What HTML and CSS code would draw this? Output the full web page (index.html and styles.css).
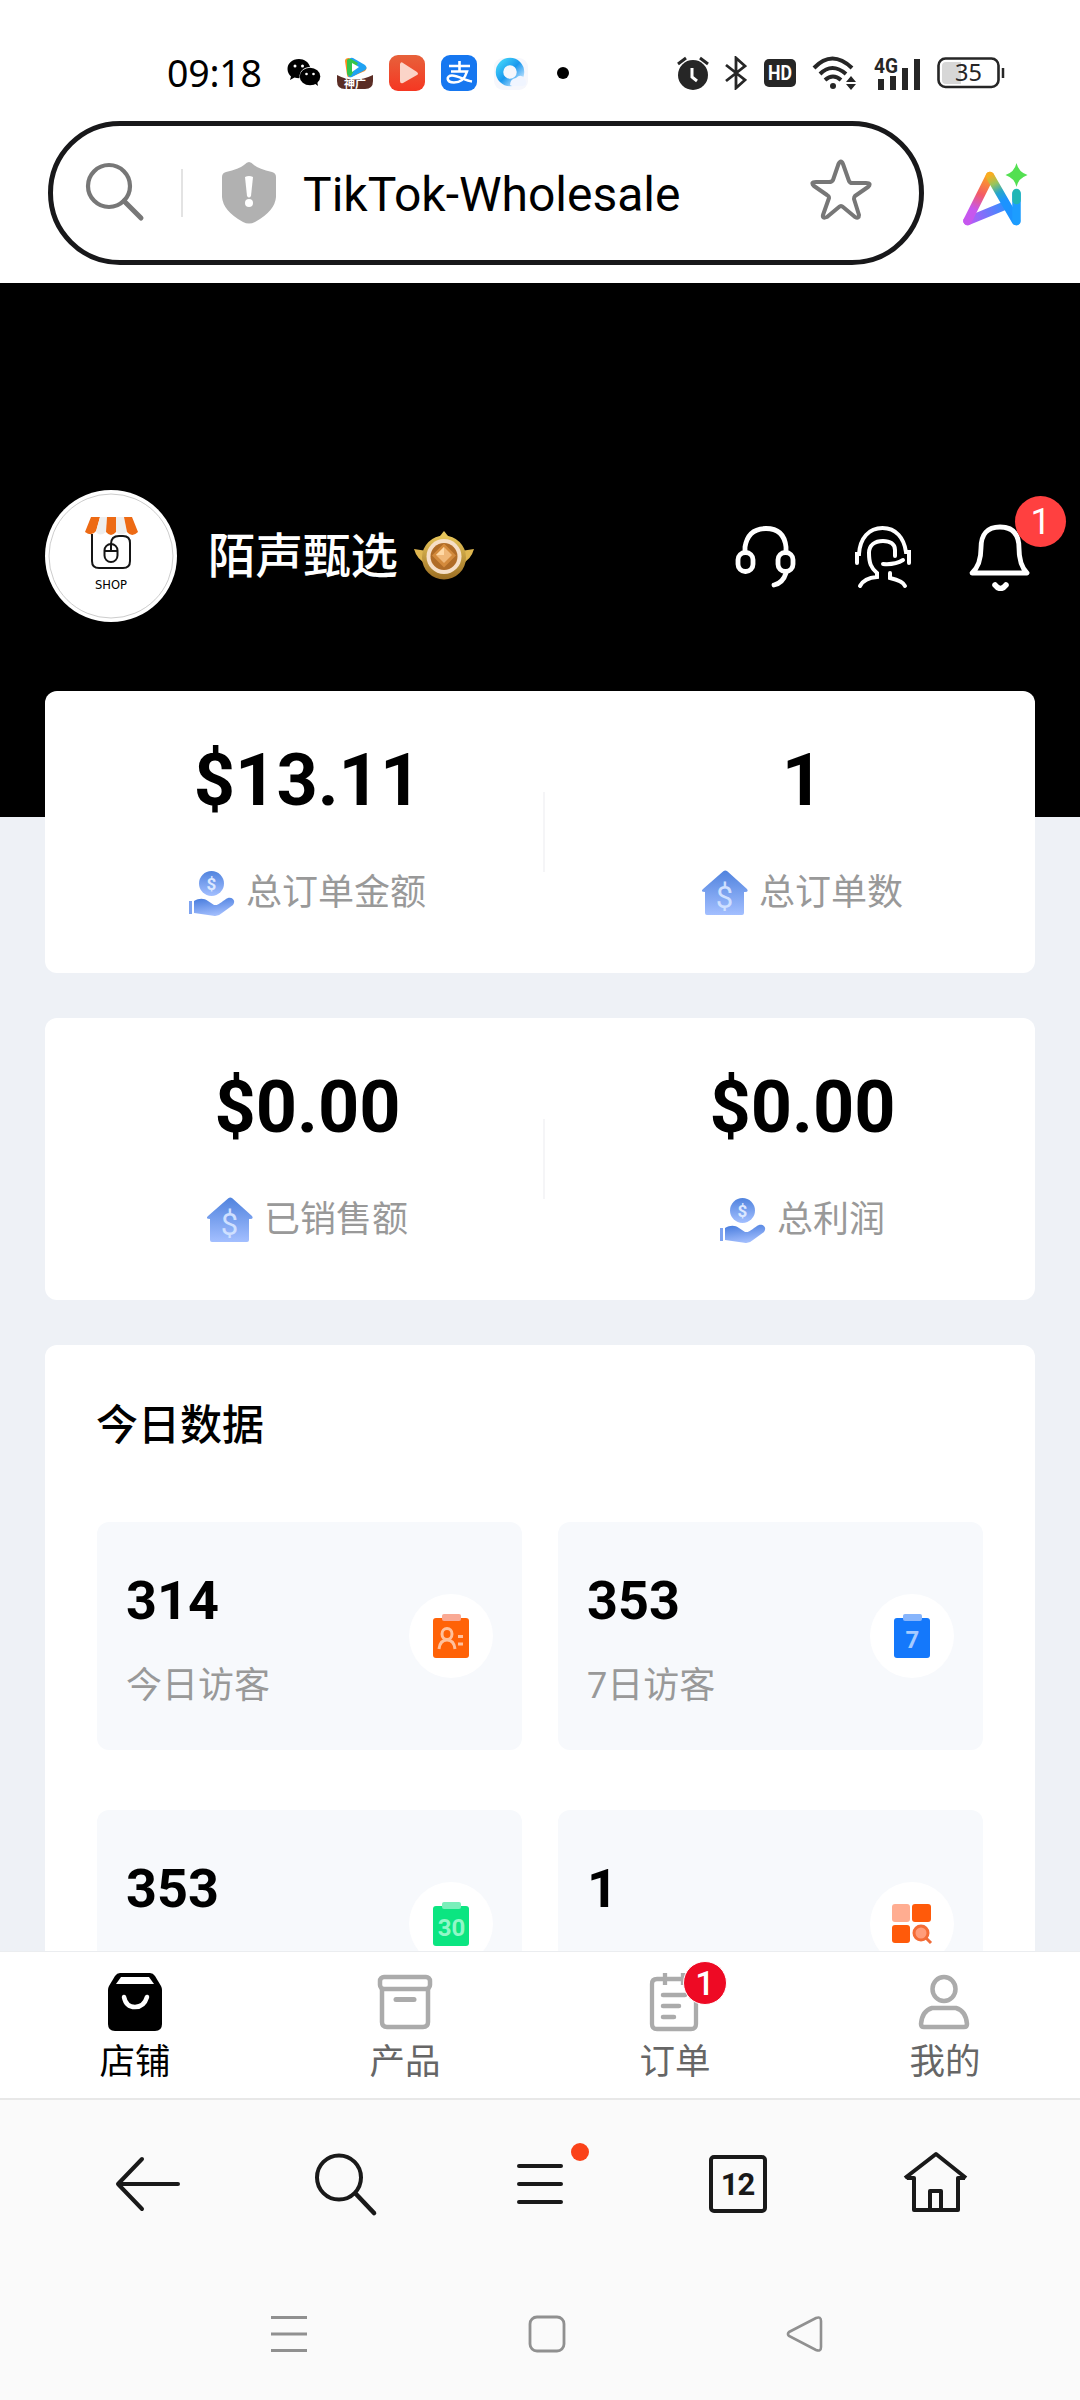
FILE: index.html
```html
<!DOCTYPE html>
<html lang="zh-CN">
<head>
<meta charset="utf-8">
<meta name="viewport" content="width=device-width, initial-scale=1">
<title>TikTok-Wholesale</title>
<link rel="stylesheet" href="styles.css">
</head>
<body>
<svg class="defs" width="0" height="0" aria-hidden="true">
  <defs>
    <linearGradient id="blue" x1="0" y1="0" x2="0" y2="1"><stop offset="0" stop-color="#5083de"/><stop offset="1" stop-color="#a3bfff"/></linearGradient>
    <linearGradient id="hand" x1="0" y1="0" x2=".3" y2="1"><stop offset="0" stop-color="#4379dc"/><stop offset="1" stop-color="#a0bcfc"/></linearGradient>
    <symbol id="money" viewBox="0 0 46 46">
      <circle cx="22.500" cy="13.500" r="12.500" fill="url(#blue)"/>
      <text x="22.500" y="19.500" text-anchor="middle" class="glyph" font-size="17" fill="#dce8ff">$</text>
      <path d="M0 31h3v13H0z" fill="#7ea3f0"/>
      <path d="M5 31c5-3 10-3 14 0l6 4c5 1 9-5 14-7 5-1 8 3 5 7L33 43q-3 3-7 3L5 43z" fill="url(#hand)"/>
    </symbol>
    <symbol id="house" viewBox="0 0 46 46">
      <path d="M21.300 1.200q2-1.500 4 0L45 19q2 3-2 3h-1v21q0 2-2 2H5q-2 0-2-2V22q-5 0-2-3z" fill="url(#blue)"/>
      <text x="22.500" y="38" text-anchor="middle" class="glyph thin" font-size="31" fill="#cfe0ff">$</text>
    </symbol>
  </defs>
</svg>
<div class="phone">
  <header class="status">
    <time class="clock">09:18</time>
    <div class="apps">
      <svg width="34" height="30" viewBox="0 0 34 30"><path d="M12 1C5 1 .500 5.500.500 11c0 3 1.500 5.500 3.500 7.500L3 22l4.500-2.500q2 .700 5 .700C12 13 17 9 23 9 22 4 17 1 12 1z"/><ellipse cx="23" cy="18.500" rx="10.300" ry="8.700"/><path d="M27 25l4 3-1-5z"/><g fill="#fff"><circle cx="8" cy="8" r="1.500"/><circle cx="15.500" cy="8" r="1.500"/><circle cx="19.500" cy="16" r="1.300"/><circle cx="26.500" cy="16" r="1.300"/></g></svg>
      <svg width="36" height="36" viewBox="0 0 36 36"><path d="M8 6q0-3 4-3L28 11q3 2 0 5L14 22q-4 1-4-2z" fill="#ff8a1f"/><path d="M12 5q1-3 4-2l12 7q3 3 0 5L15 22q-4 1-4-2z" fill="#1fa2f3"/><path d="M10 5q1-2 4-1l7 4-7 13q-4 0-4-3z" fill="#35c54a"/><path d="M15 8l7 4-7 5z" fill="#fff"/><path d="M0 20q17 9 36 0v6q0 8-8 8H8q-8 0-8-8z" fill="#5b2d25"/><text x="18" y="32.500" text-anchor="middle" class="glyph" font-size="11" fill="#fff">神广</text></svg>
      <svg width="36" height="36" viewBox="0 0 36 36"><defs><linearGradient id="red" x2="0" y2="1"><stop stop-color="#e7613b"/><stop offset="1" stop-color="#f53722"/></linearGradient></defs><rect width="36" height="36" rx="9" fill="url(#red)"/><path d="M11 9q1-3 3-1l14 9q2 2 0 3L14 28q-3 1-3-2z" fill="#fbd4c8"/></svg>
      <svg width="36" height="36" viewBox="0 0 36 36"><rect width="36" height="36" rx="9" fill="#1677f0"/><path d="M8 11h21M18.500 6v10M10 16.500h16c-2 7-7 11-13 11-8 0-8-7-2-7 6 0 13 5 20 6" fill="none" stroke="#fff" stroke-width="2.600"/></svg>
      <svg width="36" height="36" viewBox="0 0 36 36"><defs><linearGradient id="qq" x2="1" y2="1"><stop stop-color="#41d1f8"/><stop offset=".5" stop-color="#1a98ee"/><stop offset="1" stop-color="#c7e6ff"/></linearGradient></defs><rect x="1" y="3" width="34" height="32" rx="9" fill="#f6f7fc"/><circle cx="17" cy="17" r="10.500" fill="none" stroke="url(#qq)" stroke-width="7.500"/><path d="M17 30q0-6 6-7 5-5 9 1 3 6-2 7H19z" fill="#f0f5ff"/></svg>
      <span class="more-dot"></span>
    </div>
    <div class="signals">
      <svg width="34" height="36" viewBox="0 0 34 36" fill="none" stroke="#262626"><circle cx="17" cy="20" r="15" fill="#262626" stroke="none"/><path d="M2 9l8-6M32 9l-8-6" stroke-width="3"/><path d="M16 13v9l5 4" stroke="#fff" stroke-width="3"/></svg>
      <svg width="22" height="34" viewBox="0 0 22 34" fill="none" stroke="#262626" stroke-width="2.800"><path d="M1 9l19 15-9 8V2l9 8L1 25"/></svg>
      <svg width="34" height="30" viewBox="0 0 34 30"><rect x="1" y="1" width="32" height="28" rx="5" fill="#262626"/><text x="17" y="22" text-anchor="middle" class="glyph" font-size="20" textLength="24" lengthAdjust="spacingAndGlyphs" fill="#fff">HD</text></svg>
      <svg width="46" height="36" viewBox="0 0 46 36" fill="none" stroke="#262626" stroke-width="4"><path d="M2 13q18-19 38 0M8 19q12-12 26 0M13 25q8-7 16 0"/><circle cx="21" cy="31" r="3" fill="#262626" stroke="none"/><path d="M34 27l5-6 5 6zM34 29l5 6 5-6z" fill="#262626" stroke="none"/></svg>
      <svg width="48" height="34" viewBox="0 0 48 34" fill="#262626"><path d="M4 23h6v11H4zM16 20h6v14h-6zM28 12h6v22h-6zM40 3h6v31h-6z"/><text x="0" y="17" class="glyph" font-size="21" textLength="24" lengthAdjust="spacingAndGlyphs">4G</text></svg>
      <svg width="68" height="32" viewBox="0 0 68 32"><rect x="1.500" y="1.500" width="60" height="28.500" rx="7" fill="none" stroke="#262626" stroke-width="2.600"/><path d="M5 9q0-4 4-4h15v22H9q-4 0-4-4z" fill="#d7d7d7"/><path d="M66 11v10" stroke="#262626" stroke-width="2.500"/><text x="31.500" y="24" text-anchor="middle" class="light" font-size="23.500" fill="#262626">35</text></svg>
    </div>
  </header>

  <div class="address">
    <div class="pill">
      <svg class="i-search" width="62" height="62" viewBox="0 0 62 62" fill="none" stroke="#777" stroke-width="4.200" stroke-linecap="round"><circle cx="25" cy="25" r="21"/><path d="M40 40l17 17" stroke-width="5"/></svg>
      <span class="bar"></span>
      <svg class="i-shield" width="54" height="62" viewBox="0 0 54 62"><path d="M27 0q2 0 5 3 5 4 18 7 4 1 4 5v20Q53 49 33 60q-6 3-12 0Q1 49 0 35V15q0-4 4-5Q17 7 22 3q3-3 5-3z" fill="#b1b1b1"/><path d="M23 15q4-2 8 0l-2 19q-2 3-4 0z" fill="#fff"/><circle cx="27" cy="41" r="4" fill="#fff"/></svg>
      <span class="site">TikTok-Wholesale</span>
      <svg class="i-star" width="62" height="62" viewBox="0 0 62 62" fill="none" stroke="#777" stroke-width="4" stroke-linejoin="round"><path d="M28.500 5q2.500-5 4.500 0l6 17q1 2 3 2h14q6 0 2 4L45 37q-1 1-1 3l5 16q0 4-4 2l-12-10q-2-2-4 0L17 58q-5 2-4-2l6-17q0-2-2-3L4 27q-4-4 2-4h13q3 0 4-2z"/></svg>
    </div>
    <svg class="i-ai" width="66" height="64" viewBox="0 0 66 64" fill="none"><defs><linearGradient id="ai" x1="27" y1="8" x2="5" y2="59" gradientUnits="userSpaceOnUse"><stop offset=".1" stop-color="#fca321"/><stop offset=".45" stop-color="#f45b65"/><stop offset=".75" stop-color="#c657ee"/></linearGradient><linearGradient id="ai2" x1="27" y1="12" x2="50" y2="55" gradientUnits="userSpaceOnUse"><stop stop-color="#f9ad20"/><stop offset=".2" stop-color="#9bc55a"/><stop offset=".4" stop-color="#27a7c8"/><stop offset=".6" stop-color="#1c93ff"/></linearGradient><linearGradient id="ai3" x1="4" y1="58" x2="40" y2="40" gradientUnits="userSpaceOnUse"><stop stop-color="#bd58f5"/><stop offset="1" stop-color="#348eff"/></linearGradient></defs><g stroke-width="8.500" stroke-linecap="round" stroke-linejoin="round"><path d="M4.500 58L41 43" stroke="url(#ai3)"/><path d="M27 13L4.500 58" stroke="url(#ai)"/><path d="M27 13l26 45" stroke="url(#ai2)"/><path d="M53.500 58V31" stroke="#1c9dff"/><path d="M53.500 37v-7" stroke="#20b6b4"/></g><path d="M53.500 0q2 9 11 12-9 3-11 12-2-9-11-12 9-3 11-12z" fill="#53e051"/></svg>
  </div>

  <main class="page">
    <section class="hero">
      <svg class="avatar" width="132" height="132" viewBox="0 0 132 132"><circle cx="66" cy="66" r="66" fill="#fff"/><circle cx="66" cy="66" r="62" fill="none" stroke="#999" stroke-width=".5"/><g fill="none" stroke="#151515" stroke-width="2"><path d="M47 44v27q0 7 7 7h24q7 0 7-7V53q0-7-7-7h-4q-8 0-8 8"/><rect x="59.500" y="54" width="13" height="18" rx="6.500"/><path d="M59.500 61h13M66 54v7"/></g><path d="M46 27h9l-4 14q-4 6-11 1z" fill="#ed6a14"/><path d="M55 27h7l-1 15q-6 5-10 0z" fill="#eee"/><path d="M62 27h9v15q-5 6-10 0z" fill="#ed6a14"/><path d="M71 27h8l3 15q-6 5-11 0z" fill="#eee"/><path d="M79 27h8l6 15q-6 6-11 0z" fill="#ed6a14"/><text x="66" y="99" text-anchor="middle" class="shop" font-size="11.500" textLength="32" lengthAdjust="spacingAndGlyphs">SHOP</text></svg>
      <h1 class="name">陌声甄选</h1>
      <svg class="medal" width="60" height="50" viewBox="0 0 60 50"><defs><linearGradient id="gold" x2="0" y2="1"><stop stop-color="#e8c65a"/><stop offset="1" stop-color="#9b6d22"/></linearGradient></defs><path d="M0 18l13 2v13Q3 29 0 18zM60 18l-13 2v13q10-4 13-15z" fill="#dfb650"/><path d="M30 0l4 5h-8z" fill="#e5c45c"/><circle cx="30" cy="26.500" r="22" fill="url(#gold)"/><circle cx="30" cy="25.500" r="17.500" fill="#f6dfc7"/><circle cx="30" cy="25.500" r="13.500" fill="#b06c27"/><path d="M30 12.500l12 12-12 12-12-12z" fill="#d38a3c"/><path d="M30 16l8 8-8 8-8-8z" fill="#f0b878"/><path d="M22 24h8v-8z" fill="#ffd9a5"/></svg>
      <div class="actions">
        <svg width="62" height="64" viewBox="0 0 62 64" fill="none" stroke="#fff" stroke-width="4.800" stroke-linecap="round"><path d="M10 27V22Q13 3.500 31 3.500T51 22v5"/><rect x="3" y="27.500" width="15" height="19" rx="7.200"/><rect x="43" y="27.500" width="15" height="19" rx="7.200"/><path d="M51 48q-3 10-12 12"/></svg>
        <svg width="60" height="64" viewBox="0 0 60 64" fill="none" stroke="#fff" stroke-width="4" stroke-linecap="round"><path d="M4 38v-9h2C7 13 16 3 29.500 3S51 13 53 27h3v11M42 31v-6c0-6-5-9-12-9-8 0-14 4-14 12 0 10 2 15 8 20v4q-13 1-17 9M37 48v5q13 3 15 8M30 39q12 1 20-4"/></svg>
        <div class="bell">
          <svg width="64" height="68" viewBox="0 0 64 68" fill="none" stroke="#fff" stroke-width="4.800" stroke-linecap="round" stroke-linejoin="round"><path d="M3 50q9-8 9-25Q12 4 31 4T50 25q0 17 8 25z"/><path d="M26 62q5.500 7 11 0" stroke-width="5.500"/></svg>
          <span class="badge">1</span>
        </div>
      </div>
    </section>

    <section class="card totals">
      <div class="total">
        <strong>$13.11</strong>
        <span class="caption"><svg width="46" height="46"><use href="#money"/></svg>总订单金额</span>
      </div>
      <i class="rule"></i>
      <div class="total">
        <strong>1</strong>
        <span class="caption"><svg width="46" height="46"><use href="#house"/></svg>总订单数</span>
      </div>
    </section>

    <section class="card totals">
      <div class="total">
        <strong>$0.00</strong>
        <span class="caption"><svg width="46" height="46"><use href="#house"/></svg>已销售额</span>
      </div>
      <i class="rule"></i>
      <div class="total">
        <strong>$0.00</strong>
        <span class="caption"><svg width="46" height="46"><use href="#money"/></svg>总利润</span>
      </div>
    </section>

    <section class="card today">
      <h2>今日数据</h2>
      <div class="tiles">
        <div class="tile">
          <div><b>314</b><span>今日访客</span></div>
          <i class="disc"><svg width="38" height="46" viewBox="0 0 38 46"><rect x="1" y="5" width="36" height="40" rx="3" fill="#ff6207"/><rect x="10" y="1" width="19" height="7" rx="2" fill="#f9a994"/><g fill="none" stroke="#ffc09b" stroke-width="3"><ellipse cx="15" cy="21" rx="5" ry="5.500"/><path d="M7 36q1-9 8-9t8 9M26 23.500h5M26 31h5"/></g></svg></i>
        </div>
        <div class="tile">
          <div><b>353</b><span>7日访客</span></div>
          <i class="disc"><svg width="38" height="46" viewBox="0 0 38 46"><rect x="1" y="5" width="36" height="40" rx="3" fill="#1478fb"/><rect x="10" y="1" width="19" height="7" rx="2" fill="#87b5fc"/><text x="19.500" y="35" text-anchor="middle" class="glyph" font-size="24" fill="#a6cbff">7</text></svg></i>
        </div>
        <div class="tile">
          <div><b>353</b></div>
          <i class="disc"><svg width="38" height="46" viewBox="0 0 38 46"><rect x="1" y="5" width="36" height="40" rx="3" fill="#0be581"/><rect x="10" y="1" width="19" height="7" rx="2" fill="#7aefba"/><text x="19.500" y="35" text-anchor="middle" class="glyph" font-size="24" fill="#92f7c8">30</text></svg></i>
        </div>
        <div class="tile">
          <div><b>1</b></div>
          <i class="disc"><svg width="42" height="42" viewBox="0 0 42 42"><rect x="1" y="1" width="18" height="18" rx="3" fill="#ffad91"/><rect x="21" y="1" width="19" height="18" rx="3" fill="#ff5a0a"/><rect x="1" y="22" width="18" height="18" rx="3" fill="#ff5a0a"/><circle cx="30" cy="30" r="7" fill="#ff9d7a" stroke="#f56c35" stroke-width="3"/><path d="M35 35l5 5" stroke="#ef6b39" stroke-width="3"/></svg></i>
        </div>
      </div>
    </section>
  </main>

  <nav class="tabs">
    <a class="tab active">
      <svg width="56" height="60" viewBox="0 0 56 60"><path d="M13 1h30q3 0 5 3l6 10q1 2 1 4v34q0 7-7 7H8q-7 0-7-7V18q0-2 1-4L8 4q2-3 5-3z"/><path d="M14 5h28l5 7H9z" fill="#fff"/><path d="M17 25q2 10 11 10t12-10" fill="none" stroke="#fff" stroke-width="4.500" stroke-linecap="round"/></svg>店铺</a>
    <a class="tab">
      <svg width="56" height="60" viewBox="0 0 56 60" fill="none" stroke="#ababab" stroke-width="4.500"><rect x="3" y="5" width="50" height="12" rx="4"/><path d="M5 17v33q0 5 5 5h36q5 0 5-5V17"/><path d="M19 27.500h18" stroke-width="5" stroke-linecap="round"/></svg>产品</a>
    <a class="tab">
      <span class="order"><svg width="56" height="60" viewBox="-2 0 56 60" fill="none" stroke="#ababab" stroke-width="4.300"><path d="M47 20v32q0 5-5 5H8q-5 0-5-5V12q0-5 5-5h38M16 1v12M34 1v12"/><path d="M14 23h22M14 34h16M14 45h11" stroke-width="4.500" stroke-linecap="round"/></svg><span class="badge">1</span></span>订单</a>
    <a class="tab">
      <svg width="56" height="60" viewBox="1 0 56 60" fill="none" stroke="#ababab" stroke-width="4.500"><ellipse cx="28" cy="17" rx="11.500" ry="12"/><path d="M16 36h24q10 3 11 16 0 3-3 3H8q-3 0-3-3 1-13 11-16z"/></svg>我的</a>
  </nav>

  <nav class="tools" aria-label="浏览器">
    <svg width="68" height="68" viewBox="0 0 68 68" fill="none" stroke="#191919" stroke-width="4" stroke-linecap="round" stroke-linejoin="round"><path d="M28 9L4 34l24 25M4 34h60"/></svg>
    <svg width="68" height="68" viewBox="0 0 68 68" fill="none" stroke="#191919" stroke-width="4" stroke-linecap="round"><circle cx="27" cy="27.500" r="22"/><path d="M44 44l18 19" stroke-width="4.600"/></svg>
    <span class="menu"><svg width="68" height="68" viewBox="0 0 68 68" fill="none" stroke="#191919" stroke-width="4" stroke-linecap="round"><path d="M10 16h42M10 34h42M10 52h42"/></svg></span>
    <span class="count">12</span>
    <svg width="68" height="68" viewBox="0 0 68 68" fill="none" stroke="#191919" stroke-width="4" stroke-linejoin="round"><path d="M3 28L34 4l30 24M5 28h7v32h44V28h7M28 60V41h11v19"/></svg>
  </nav>

  <nav class="system" aria-label="系统">
    <svg width="36" height="36" viewBox="0 0 36 36" stroke="#909090" stroke-width="3"><path d="M0 1.500h36M0 18h36M0 34.500h36"/></svg>
    <svg width="38" height="38" viewBox="0 0 38 38" fill="none" stroke="#909090" stroke-width="2.800"><rect x="2" y="2" width="34" height="34" rx="7"/></svg>
    <svg width="38" height="38" viewBox="0 0 38 38" fill="none" stroke="#909090" stroke-width="2.600"><path d="M3 17L30 3q5-2 5 3v26q0 5-5 3L3 21q-2-2 0-4z"/></svg>
  </nav>
</div>
</body>
</html>
```
FILE: styles.css
```css
* { box-sizing: border-box; margin: 0; padding: 0; }
html, body { width: 1080px; height: 2400px; overflow: hidden; }
body { background: #fff; color: #000; font-family: Roboto, "Noto Sans CJK SC", sans-serif; }
svg { display: block; flex: none; }
.defs { position: absolute; }
i { font-style: normal; }
.glyph { font-family: Roboto, "Noto Sans CJK SC", sans-serif; font-weight: 700; }
.thin { font-weight: 400; }
.light { font-family: "Noto Sans", sans-serif; }
.shop { font-family: "DejaVu Sans", sans-serif; }

.phone { display: flex; flex-direction: column; height: 2400px; }

.status { display: flex; align-items: center; height: 110px; padding: 35px 75px 0 167px; flex: none; }
.clock { width: 120px; font: 400 37.500px/1 "Noto Sans", sans-serif; letter-spacing: -.2px; }
.apps { display: flex; align-items: center; gap: 16px; }
.more-dot { width: 12px; height: 12px; margin-left: 12px; border-radius: 50%; background: #000; }
.signals { display: flex; align-items: center; gap: 15.500px; margin-left: auto; }

.address { display: flex; align-items: center; height: 173px; padding: 0 51px 0 48px; flex: none; }
.pill { display: flex; flex: none; align-items: center; width: 876px; height: 144px; margin-top: -7px; padding: 0 47px 0 31px; border: 5px solid #18181a; border-radius: 72px; }
.i-search { margin-top: -2px; }
.bar { width: 2px; height: 48px; margin: 0 39px 0 35px; background: #e3e3e3; }
.site { flex: 1; margin-left: 27px; padding-top: 3px; font-size: 48px; line-height: 60px; white-space: nowrap; }
.i-star { margin-top: -6px; }
.i-ai { margin: -3px 0 0 39px; }

.page { flex: none; height: 1668px; overflow: hidden; padding: 0 45px; background: linear-gradient(#000 534px, #eef1f6 534px); }
.hero { display: flex; align-items: center; height: 408px; padding-top: 138px; }
.name { margin-left: 31px; padding-top: 2px; font-size: 47.500px; font-weight: 500; line-height: 60px; color: #fff; }
.medal { margin-left: 16px; }
.actions { display: flex; align-items: center; gap: 56px; margin: 2px 2px 0 auto; }
.bell { position: relative; }
.badge { position: absolute; display: flex; align-items: center; justify-content: center; border-radius: 50%; color: #fff; }
.bell .badge { top: -27px; left: 46px; width: 51px; height: 51px; background: #ff4040; font-size: 36px; }

.card { border-radius: 12px; background: #fff; }
.totals { display: flex; height: 282px; margin-bottom: 45px; }
.total { display: flex; flex: 0 0 498px; flex-direction: column; align-items: center; padding: 46px 0 0 27px; }
.rule + .total { flex: 1; padding-left: 25px; }
.total strong { font-size: 72px; font-weight: 700; line-height: 88px; }
.caption { display: flex; align-items: center; gap: 11px; margin-top: 41px; font-size: 36px; line-height: 54px; color: #999; }
.rule { width: 2px; height: 80px; margin-top: 101px; background: #f5f5f7; }

.today { padding: 54px 52px 0; }
.today h2 { margin-left: -1px; font-size: 42px; font-weight: 500; line-height: 54px; }
.tiles { display: grid; grid-template-columns: 1fr 1fr; gap: 60px 36px; margin-top: 69px; }
.tile { display: flex; align-items: center; justify-content: space-between; height: 228px; padding: 0 29px 0 29px; border-radius: 12px; background: #f7f9fc; }
.tile > div { display: flex; flex-direction: column; align-self: flex-start; gap: 26px; padding-top: 47px; }
.tile b { font-size: 54px; line-height: 64px; }
.tile span { font-size: 36px; line-height: 54px; color: #999; }
.disc { display: flex; align-items: center; justify-content: center; width: 84px; height: 84px; border-radius: 50%; background: #fff; }

.tabs { display: flex; flex: none; height: 149px; padding-top: 20px; border-top: 1px solid #ebedf0; border-bottom: 2px solid #e8e8e8; background: #fff; }
.tab { display: flex; flex: 1; flex-direction: column; align-items: center; font-size: 35.500px; line-height: 60px; color: #666; }
.tab.active { color: #000; }
.order { position: relative; }
.order .badge { top: -11px; left: 36px; width: 44px; height: 44px; border: 1px solid #fff; background: #ee0a24; font-size: 34px; font-weight: 500; }

.tools { display: flex; flex: none; align-items: center; justify-content: space-between; height: 168px; padding: 0 110px 0 114px; background: #fafafa; }
.menu { position: relative; }
.menu::after { content: ""; position: absolute; top: -7px; right: -12px; width: 18px; height: 18px; border-radius: 50%; background: #fa4219; }
.count { display: flex; align-items: center; justify-content: center; width: 58px; height: 58px; margin: 0 6px 0 2px; border: 4px solid #191919; border-radius: 5px; font-size: 31px; font-weight: 700; letter-spacing: -1px; color: #191919; }
.system { display: flex; flex: 1; align-items: center; justify-content: space-between; padding: 0 256px 1px 271px; background: #fafafa; }
```
